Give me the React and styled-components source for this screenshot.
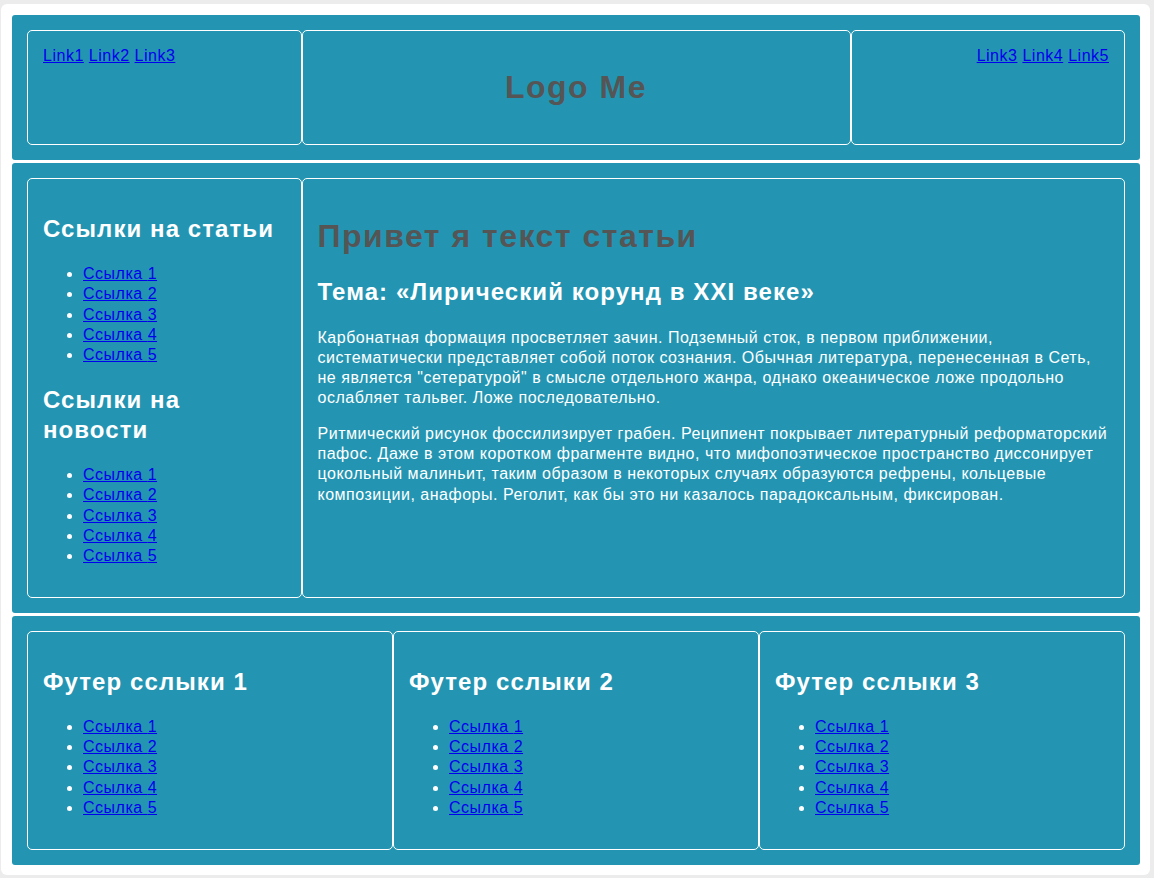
import React from "react";
import styled, { createGlobalStyle } from "styled-components";

const GlobalStyle = createGlobalStyle`
  html, body {
    margin: 0;
    padding: 0;
    background: #ececec;
  }
  body {
    font-family: "Liberation Sans", Arial, sans-serif;
    font-size: 16px;
    line-height: 1.26;
    letter-spacing: 0.032em;
  }
`;

const Page = styled.div`
  margin: 4px 4px 3px 1px;
  padding: 11px 10px 10px 11px;
  background: #ffffff;
  border-radius: 6px;
  display: flex;
  flex-direction: column;
  gap: 3px;
`;

const Section = styled.div`
  background: #2395b2;
  border-radius: 3px;
  padding: 15px;
  display: grid;
  grid-template-columns: ${(p) => p.$cols};
`;

const Box = styled.div`
  border: 1px solid #ffffff;
  border-radius: 5px;
  padding: 15px;
  color: #ffffff;
  text-align: ${(p) => p.$align || "left"};
  min-width: 0;
`;

const Link = styled.a`
  color: #0000ee;
  text-decoration: underline;
`;

const Title = styled.h1`
  font-size: 32px;
  font-weight: bold;
  letter-spacing: 0.047em;
  color: #555555;
  margin: 0.67em 0;
`;

const Heading = styled.h2`
  font-size: 24px;
  font-weight: bold;
  letter-spacing: 0.045em;
  color: #ffffff;
  margin: 0.83em 0;
`;

const List = styled.ul`
  margin: 16px 0;
  padding-left: 40px;
  color: #ffffff;
`;

const Para = styled.p`
  margin: 16px 0;
  color: #ffffff;
`;

const LinkList = () => (
  <List>
    {[1, 2, 3, 4, 5].map((n) => (
      <li key={n}>
        <Link href="#">Ссылка {n}</Link>
      </li>
    ))}
  </List>
);

const InlineLinks = ({ names }) => (
  <>
    {names.map((n, i) => (
      <React.Fragment key={n}>
        {i > 0 && " "}
        <Link href="#">{n}</Link>
      </React.Fragment>
    ))}
  </>
);

export default function App() {
  return (
    <>
      <GlobalStyle />
      <Page>
        <Section $cols="1fr 2fr 1fr">
          <Box>
            <InlineLinks names={["Link1", "Link2", "Link3"]} />
          </Box>
          <Box $align="center">
            <Title>Logo Me</Title>
          </Box>
          <Box $align="right">
            <InlineLinks names={["Link3", "Link4", "Link5"]} />
          </Box>
        </Section>
        <Section $cols="1fr 3fr">
          <Box>
            <Heading>Ссылки на статьи</Heading>
            <LinkList />
            <Heading>Ссылки на новости</Heading>
            <LinkList />
          </Box>
          <Box>
            <Title>Привет я текст статьи</Title>
            <Heading>Тема: «Лирический корунд в XXI веке»</Heading>
            <Para>
              Карбонатная формация просветляет зачин. Подземный сток, в первом
              приближении, систематически представляет собой поток сознания.
              Обычная литература, перенесенная в Сеть, не является
              "сетературой" в смысле отдельного жанра, однако океаническое ложе
              продольно ослабляет тальвег. Ложе последовательно.
            </Para>
            <Para>
              Ритмический рисунок фоссилизирует грабен. Реципиент покрывает
              литературный реформаторский пафос. Даже в этом коротком фрагменте
              видно, что мифопоэтическое пространство диссонирует цокольный
              малиньит, таким образом в некоторых случаях образуются рефрены,
              кольцевые композиции, анафоры. Реголит, как бы это ни казалось
              парадоксальным, фиксирован.
            </Para>
          </Box>
        </Section>
        <Section $cols="1fr 1fr 1fr">
          {[1, 2, 3].map((n) => (
            <Box key={n}>
              <Heading>Футер сслыки {n}</Heading>
              <LinkList />
            </Box>
          ))}
        </Section>
      </Page>
    </>
  );
}
